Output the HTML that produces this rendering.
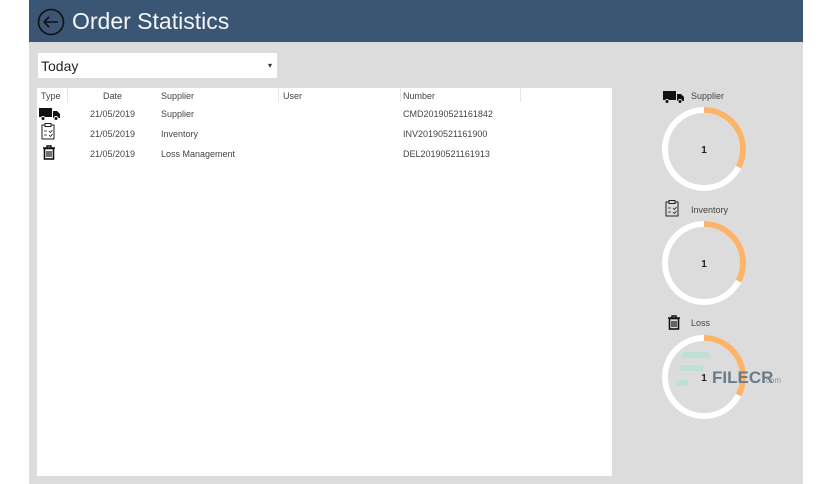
<!DOCTYPE html>
<html><head><meta charset="utf-8"><style>
body{margin:0;width:836px;height:484px;background:#fff;position:relative;overflow:hidden;font-family:"Liberation Sans",sans-serif;}
.app{position:absolute;left:29px;top:0;width:774px;height:484px;background:#dcdcdc;}
.hdr{position:absolute;left:0;top:0;width:774px;height:42px;background:#3b5574;}
.title{position:absolute;left:43px;top:8px;color:#f4f6f8;font-size:23px;}
.dd{position:absolute;left:9px;top:53px;width:239px;height:25px;background:#fff;}
.dd span{position:absolute;left:3px;top:5px;font-size:14px;color:#222}
.dd i{position:absolute;right:5px;top:8px;font-style:normal;font-size:8px;color:#333}
.tbl{position:absolute;left:8px;top:88px;width:575px;height:388px;background:#fff;font-size:9px;color:#444;}
.t{position:absolute;white-space:nowrap}
.sep{position:absolute;top:0;width:1px;height:14px;background:#e6e6e6}
.lbl{position:absolute;font-size:9px;color:#444}
</style></head><body>
<div class="app">
<div class="hdr">
<svg style="position:absolute;left:8px;top:8px" width="28" height="28" viewBox="0 0 28 28"><circle cx="14" cy="14" r="12.5" fill="none" stroke="#111" stroke-width="1.6"/><path d="M7 14h14M7 14l5-5M7 14l5 5" fill="none" stroke="#111" stroke-width="1.6"/></svg>
<div class="title">Order Statistics</div>
</div>
<div class="dd"><span>Today</span><i>▾</i></div>
<div class="tbl">
<div class="sep" style="left:30px"></div><div class="sep" style="left:241px"></div><div class="sep" style="left:363px"></div><div class="sep" style="left:483px"></div>
<div class="t" style="left:4px;top:3px">Type</div>
<div class="t" style="left:66px;top:3px">Date</div>
<div class="t" style="left:124px;top:3px">Supplier</div>
<div class="t" style="left:246px;top:3px">User</div>
<div class="t" style="left:366px;top:3px">Number</div>
<svg style="position:absolute;left:2px;top:19px" width="22" height="14" viewBox="0 0 22 14"><rect x="0" y="1" width="13" height="9" fill="#111"/><path d="M14 4h4l3 3v4h-7z" fill="#111"/><circle cx="4" cy="11.5" r="2" fill="#111" stroke="#fff"/><circle cx="17" cy="11.5" r="2" fill="#111" stroke="#fff"/></svg>
<svg style="position:absolute;left:4px;top:35px" width="14" height="17" viewBox="0 0 14 17"><rect x="1" y="2" width="12" height="14" fill="none" stroke="#222"/><rect x="4" y="0.5" width="6" height="3" fill="#fff" stroke="#222"/><path d="M3 8h3M3 12h3M8 8l1.5 1.5 2-2.5M8 12l1.5 1.5 2-2.5" stroke="#222" fill="none" stroke-width=".8"/></svg>
<svg style="position:absolute;left:6px;top:57px" width="12" height="15" viewBox="0 0 12 15"><path d="M0 3h12M4 3V1h4v2" stroke="#111" fill="none" stroke-width="1.4"/><rect x="1.5" y="3.5" width="9" height="10.5" fill="none" stroke="#111" stroke-width="1.6"/><path d="M4 6v6M6 6v6M8 6v6" stroke="#111" stroke-width="1.2"/></svg>
<div class="t" style="left:53px;top:21px">21/05/2019</div><div class="t" style="left:124px;top:21px">Supplier</div><div class="t" style="left:366px;top:21px">CMD20190521161842</div>
<div class="t" style="left:53px;top:41px">21/05/2019</div><div class="t" style="left:124px;top:41px">Inventory</div><div class="t" style="left:366px;top:41px">INV20190521161900</div>
<div class="t" style="left:53px;top:61px">21/05/2019</div><div class="t" style="left:124px;top:61px">Loss Management</div><div class="t" style="left:366px;top:61px">DEL20190521161913</div>
</div>
<svg style="position:absolute;left:634px;top:90px" width="22" height="14" viewBox="0 0 22 14"><rect x="0" y="1" width="13" height="9" fill="#111"/><path d="M14 4h4l3 3v4h-7z" fill="#111"/><circle cx="4" cy="11.5" r="2" fill="#111" stroke="#dcdcdc"/><circle cx="17" cy="11.5" r="2" fill="#111" stroke="#dcdcdc"/></svg>
<div class="lbl" style="left:662px;top:91px">Supplier</div>
<svg style="position:absolute;left:636px;top:200px" width="14" height="17" viewBox="0 0 14 17"><rect x="1" y="2" width="12" height="14" fill="none" stroke="#222"/><rect x="4" y="0.5" width="6" height="3" fill="#dcdcdc" stroke="#222"/><path d="M3 8h3M3 12h3M8 8l1.5 1.5 2-2.5M8 12l1.5 1.5 2-2.5" stroke="#222" fill="none" stroke-width=".8"/></svg>
<div class="lbl" style="left:662px;top:205px">Inventory</div>
<svg style="position:absolute;left:639px;top:315px" width="12" height="15" viewBox="0 0 12 15"><path d="M0 3h12M4 3V1h4v2" stroke="#111" fill="none" stroke-width="1.4"/><rect x="1.5" y="3.5" width="9" height="10.5" fill="none" stroke="#111" stroke-width="1.6"/><path d="M4 6v6M6 6v6M8 6v6" stroke="#111" stroke-width="1.2"/></svg>
<div class="lbl" style="left:662px;top:318px">Loss</div>
<svg style="position:absolute;left:620px;top:100px" width="150" height="330" viewBox="0 0 150 330">
<g fill="none" stroke-width="6">
<circle cx="55" cy="49" r="39" stroke="#fff"/><circle cx="55" cy="49" r="39" stroke="#fbb469" stroke-dasharray="80 300" transform="rotate(-90 55 49)"/>
<circle cx="55" cy="163" r="39" stroke="#fff"/><circle cx="55" cy="163" r="39" stroke="#fbb469" stroke-dasharray="80 300" transform="rotate(-90 55 163)"/>
<circle cx="55" cy="277" r="39" stroke="#fff"/><circle cx="55" cy="277" r="39" stroke="#fbb469" stroke-dasharray="80 300" transform="rotate(-90 55 277)"/>
</g>
<g font-family="Liberation Sans" font-size="10" font-weight="bold" fill="#222" text-anchor="middle">
<text x="55" y="53">1</text><text x="55" y="167">1</text><text x="55" y="281">1</text></g>
<g fill="#bfe0d4"><rect x="33" y="252" width="28" height="6"/><rect x="30" y="265" width="24" height="6"/><rect x="27" y="280" width="12" height="6"/></g>
<text x="63" y="283" font-family="Liberation Sans" font-size="17" font-weight="bold" fill="#6a7a86">FILECR</text>
<text x="132" y="283" font-family="Liberation Sans" font-size="8" fill="#8a959d" text-anchor="end">.com</text>
</svg>
</div>
</body></html>
